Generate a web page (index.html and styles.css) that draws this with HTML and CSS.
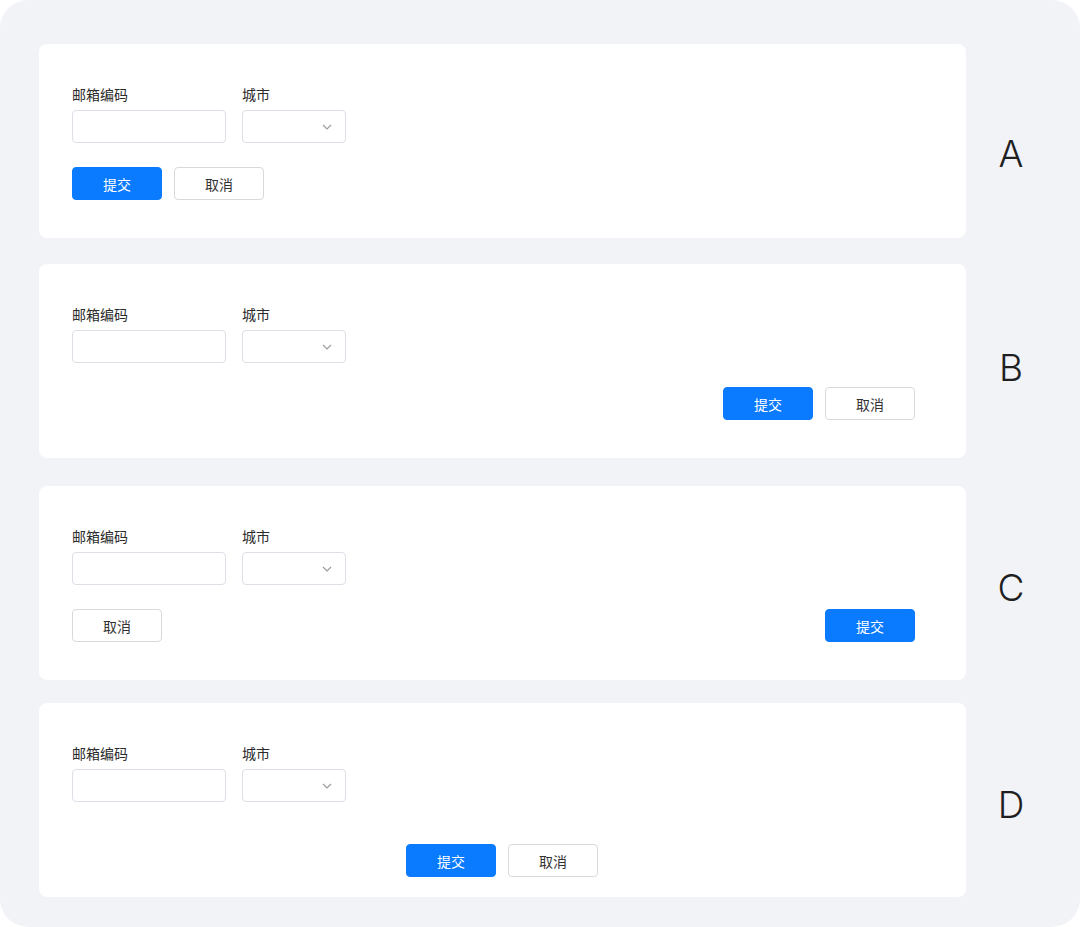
FILE: index.html
```html
<!DOCTYPE html>
<html lang="zh-CN">
<head>
<meta charset="utf-8">
<title>表单按钮布局</title>
<link rel="stylesheet" href="styles.css">
</head>
<body>
<div class="page">
  <div class="row">
    <div class="card">
      <div class="fields">
        <div class="field"><div class="label">邮箱编码</div><div class="input"></div></div>
        <div class="field"><div class="label">城市</div><div class="select"><svg class="chev" width="10" height="6" viewBox="0 0 10 6"><path d="M1 1l4 4 4-4" fill="none" stroke="#9a9a9a" stroke-width="1.1"/></svg></div></div>
      </div>
      <div class="actions actions-a">
        <button class="btn btn-primary">提交</button>
        <button class="btn btn-default">取消</button>
      </div>
    </div>
    <div class="letter letter-a">A</div>
  </div>
  <div class="row">
    <div class="card">
      <div class="fields">
        <div class="field"><div class="label">邮箱编码</div><div class="input"></div></div>
        <div class="field"><div class="label">城市</div><div class="select"><svg class="chev" width="10" height="6" viewBox="0 0 10 6"><path d="M1 1l4 4 4-4" fill="none" stroke="#9a9a9a" stroke-width="1.1"/></svg></div></div>
      </div>
      <div class="actions actions-b">
        <button class="btn btn-primary">提交</button>
        <button class="btn btn-default">取消</button>
      </div>
    </div>
    <div class="letter letter-b">B</div>
  </div>
  <div class="row row-c">
    <div class="card">
      <div class="fields">
        <div class="field"><div class="label">邮箱编码</div><div class="input"></div></div>
        <div class="field"><div class="label">城市</div><div class="select"><svg class="chev" width="10" height="6" viewBox="0 0 10 6"><path d="M1 1l4 4 4-4" fill="none" stroke="#9a9a9a" stroke-width="1.1"/></svg></div></div>
      </div>
      <div class="actions actions-c">
        <button class="btn btn-default">取消</button>
        <button class="btn btn-primary">提交</button>
      </div>
    </div>
    <div class="letter">C</div>
  </div>
  <div class="row row-d">
    <div class="card">
      <div class="fields">
        <div class="field"><div class="label">邮箱编码</div><div class="input"></div></div>
        <div class="field"><div class="label">城市</div><div class="select"><svg class="chev" width="10" height="6" viewBox="0 0 10 6"><path d="M1 1l4 4 4-4" fill="none" stroke="#9a9a9a" stroke-width="1.1"/></svg></div></div>
      </div>
      <div class="actions actions-d">
        <button class="btn btn-primary">提交</button>
        <button class="btn btn-default">取消</button>
      </div>
    </div>
    <div class="letter">D</div>
  </div>
</div>
</body>
</html>
```

FILE: styles.css
```css
* { box-sizing: border-box; }
html, body { margin: 0; padding: 0; background: #ffffff; }
body {
  font-family: "Noto Sans CJK SC", "Noto Sans", sans-serif;
  width: 1080px;
  height: 927px;
  overflow: hidden;
}
.page {
  width: 1080px;
  height: 927px;
  background: #f2f3f7;
  border-radius: 28px;
  padding: 44px 24px 0 39px;
  display: flex;
  flex-direction: column;
  gap: 26px;
}
.row {
  display: flex;
  align-items: center;
}
.row-c { margin-top: 2px; }
.row-d { margin-top: -3px; }
.card {
  width: 927px;
  height: 194px;
  background: #ffffff;
  border-radius: 8px;
  padding: 40px 51px 0 33px;
  display: flex;
  flex-direction: column;
}
.fields {
  display: flex;
  gap: 16px;
}
.field {
  display: flex;
  flex-direction: column;
}
.label {
  font-size: 14px;
  line-height: 20px;
  color: #2b2b2b;
  margin-bottom: 6px;
}
.input, .select {
  height: 33px;
  border: 1px solid #dcdfe6;
  border-radius: 4px;
  background: #fff;
}
.input { width: 154px; }
.select {
  width: 104px;
  display: flex;
  align-items: center;
  justify-content: flex-end;
  padding-right: 13px;
}
.chev { display: block; }
.actions {
  display: flex;
  gap: 12px;
  margin-top: 24px;
}
.actions-b { justify-content: flex-end; }
.actions-c { justify-content: space-between; }
.actions-d { justify-content: center; margin-top: 42px; padding-left: 17px; }
.btn {
  width: 90px;
  height: 33px;
  border-radius: 4px;
  font-family: "Noto Sans CJK SC", sans-serif;
  font-size: 14px;
  line-height: 1;
  padding: 0;
  cursor: pointer;
}
.btn-primary {
  background: #0a7aff;
  border: 1px solid #0a7aff;
  color: #ffffff;
}
.btn-default {
  background: #ffffff;
  border: 1px solid #d9d9d9;
  color: #333333;
}
.letter {
  flex: 1;
  text-align: center;
  font-family: "Inter", "Noto Sans", sans-serif;
  font-weight: 300;
  font-size: 37px;
  line-height: 1;
  color: #1f1f1f;
  padding-top: 9px;
}
.letter-a { padding-top: 25px; }
.letter-b { padding-top: 12px; }
```
